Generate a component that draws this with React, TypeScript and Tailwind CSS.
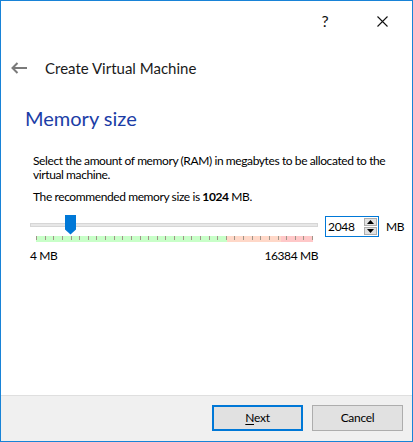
import React from "react";

const TICKS = Array.from({ length: 33 }, (_, i) => i);

function BackArrow() {
  return (
    <svg width="18" height="12" viewBox="0 0 18 12" className="block">
      <path d="M17 6H2.5M7.5 1L2.5 6l5 5" fill="none" stroke="#7a7a7a" strokeWidth="2" />
    </svg>
  );
}

function SliderThumb() {
  return (
    <svg width="11" height="20" viewBox="0 0 11 20" className="block">
      <path d="M0 0H11V14.5L5.5 19.5L0 14.5Z" fill="#0078d7" />
    </svg>
  );
}

function SpinArrows() {
  return (
    <div className="flex flex-col w-[13px] h-[17px] gap-[1px]">
      <div className="flex-1 flex items-center justify-center bg-[#e1e1e1] border border-[#adadad]">
        <svg width="7" height="4" viewBox="0 0 7 4">
          <path d="M3.5 0L7 4H0Z" fill="#000" />
        </svg>
      </div>
      <div className="flex-1 flex items-center justify-center bg-[#e1e1e1] border border-[#adadad]">
        <svg width="7" height="4" viewBox="0 0 7 4">
          <path d="M0 0H7L3.5 4Z" fill="#000" />
        </svg>
      </div>
    </div>
  );
}

export default function App() {
  // memory slider: 4 MB .. 16384 MB, current value 2048
  const min = 4;
  const max = 16384;
  const value = 2048;
  const thumbLeft = ((value - min) / (max - min)) * 276 + 6 - 5.5;

  return (
    <div
      className="w-[413px] h-[442px] border border-[#1883d7] bg-white flex flex-col text-[#000]"
      style={{ fontFamily: 'Lato, "Noto Sans", sans-serif' }}
    >
      {/* title bar */}
      <div className="h-[40px] flex items-center justify-end pr-[7px]">
        <div className="w-[46px] text-center text-[16px] leading-none text-[#111]">?</div>
        <div className="w-[11px]" />
        <div className="w-[46px] flex items-center justify-center">
          <svg width="11" height="11" viewBox="0 0 11 11">
            <path d="M0.5 0.5L10.5 10.5M10.5 0.5L0.5 10.5" stroke="#111" strokeWidth="1.1" />
          </svg>
        </div>
      </div>

      <div className="flex-1 flex flex-col">
        {/* header */}
        <div className="h-[28px] mt-[13px] flex items-center">
          <div className="pl-[9px] w-[44px]">
            <BackArrow />
          </div>
          <span className="text-[15px] text-[#1a1a1a]">Create Virtual Machine</span>
        </div>

        <div className="mt-[22px] pl-[24px] h-[28px] text-[20px] leading-[28px] text-[#1b3da6]">
          Memory size
        </div>

        <div className="mt-[22px] pl-[32px] text-[12px] leading-[14px] tracking-[-0.4px] whitespace-nowrap">
          Select the amount of memory (RAM) in megabytes to be allocated to the
          <br />
          virtual machine.
        </div>

        <div className="mt-[8px] pl-[32px] text-[12px] leading-[14px] tracking-[-0.4px] whitespace-nowrap">
          The recommended memory size is <b className="font-bold">1024</b> MB.
        </div>

        {/* slider row */}
        <div className="mt-[11px] pl-[29px] flex items-start">
          <div className="w-[288px] flex flex-col">
            <div className="relative h-[20px]">
              <div className="absolute left-0 right-0 top-[8px] h-[4px] bg-[#e7e7e7] border border-[#d6d6d6]" />
              <div className="absolute top-0" style={{ left: thumbLeft }}>
                <SliderThumb />
              </div>
            </div>
            <div className="mt-[1px] ml-[6px] w-[277px] h-[6px] flex relative">
              <div className="w-[191px] bg-[#c8ffc8]" />
              <div className="w-[54px] bg-[#ffd8c8]" />
              <div className="flex-1 bg-[#ffc8c8]" />
              <div className="absolute inset-0 flex justify-between">
                {TICKS.map((t) => (
                  <div key={t} className="w-[1px] h-[4px] bg-[#a09488]" />
                ))}
              </div>
            </div>
            <div className="mt-[7px] flex justify-between text-[12px] leading-[13px] tracking-[-0.4px]">
              <span>4 MB</span>
              <span>16384 MB</span>
            </div>
          </div>

          <div className="ml-[7px] mt-[1px] w-[54px] h-[21px] border border-[#0078d7] flex items-center pl-[2px] pr-[1px]">
            <span className="flex-1 text-[12px] leading-none tracking-[-0.3px]">2048</span>
            <SpinArrows />
          </div>
          <span className="ml-[7px] mt-[5px] text-[12px] leading-[13px] tracking-[-0.3px]">MB</span>
        </div>
      </div>

      {/* footer */}
      <div className="h-[46px] border-t border-[#dfdfdf] bg-[#f0f0f0] flex justify-end items-start pt-[9px] pr-[9px] gap-[9px]">
        <button className="w-[91px] h-[26px] bg-[#e1e1e1] border-2 border-[#0078d7] text-[12px] tracking-[-0.3px]">
          <span className="underline underline-offset-2">N</span>ext
        </button>
        <button className="w-[91px] h-[26px] bg-[#e1e1e1] border border-[#adadad] text-[12px] tracking-[-0.3px]">
          Cancel
        </button>
      </div>
    </div>
  );
}
